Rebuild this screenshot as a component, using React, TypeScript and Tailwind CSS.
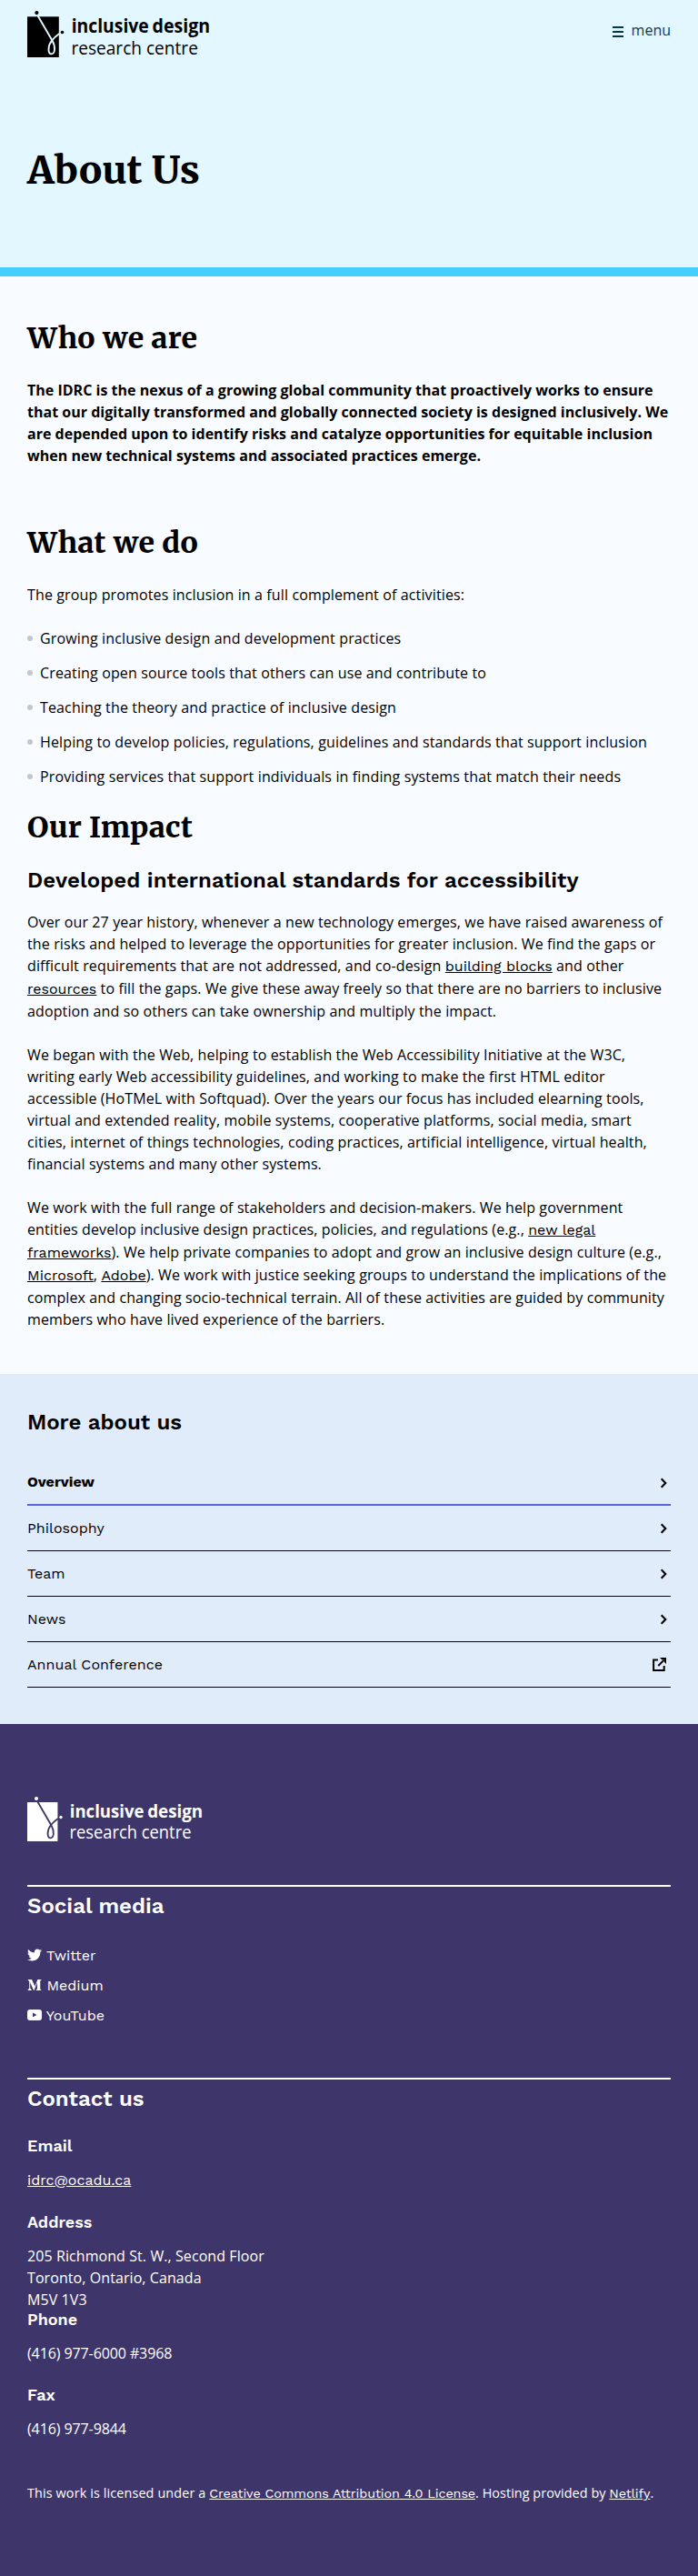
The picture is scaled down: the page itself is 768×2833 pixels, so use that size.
import type { ReactNode } from "react";
import { FaMediumM, FaTwitter } from "react-icons/fa";

const activities = [
  "Growing inclusive design and development practices",
  "Creating open source tools that others can use and contribute to",
  "Teaching the theory and practice of inclusive design",
  "Helping to develop policies, regulations, guidelines and standards that support inclusion",
  "Providing services that support individuals in finding systems that match their needs",
];

const pages = ["Philosophy", "Team", "News"];

function Logo({ className, ink, paper }: { className: string; ink: string; paper: string }) {
  return (
    <svg className={className} viewBox="0 0 202 54" role="img" aria-label="Inclusive Design Research Centre">
      <rect x="0" y="8.3" width="34.8" height="44.7" fill={ink} />
      <path
        d="M10.8 6 L27.3 34.2 C31.6 41.5 30.5 49.3 26.6 49.3 C22.6 49.3 22.2 40.6 27 34.6 C29 32 31.5 29.8 35.2 27"
        fill="none"
        stroke={paper}
        strokeWidth="1.9"
      />
      <circle cx="10.4" cy="4.1" r="2.1" fill={ink} />
      <circle cx="38.5" cy="25.5" r="1.8" fill={ink} />
      <g fill={ink} fontFamily="'Open Sans', sans-serif" fontSize="20.6" letterSpacing="0">
        <text x="48.7" y="26" fontWeight="700" textLength="85" lengthAdjust="spacingAndGlyphs">inclusive</text>
        <text x="137.6" y="26" fontWeight="700" textLength="63.6" lengthAdjust="spacingAndGlyphs">design</text>
        <text x="48.4" y="49.6" textLength="139.5" lengthAdjust="spacingAndGlyphs">research centre</text>
      </g>
    </svg>
  );
}

function Link({ children }: { children: ReactNode }) {
  return (
    <a href="#" className="font-['Work_Sans',Inter,sans-serif] tracking-normal underline">
      {children}
    </a>
  );
}

function SectionTitle({ children }: { children: ReactNode }) {
  return (
    <h2 className="font-['Merriweather','DejaVu_Serif_Condensed',serif] text-[32px] leading-10 font-extrabold tracking-[0.27px]">
      {children}
    </h2>
  );
}

function SubTitle({ children }: { children: ReactNode }) {
  return (
    <h3 className="font-['Work_Sans',Inter,sans-serif] text-2xl leading-[30px] font-semibold">
      {children}
    </h3>
  );
}

function ContactTitle({ children }: { children: ReactNode }) {
  return (
    <h4 className="font-['Work_Sans',Inter,sans-serif] text-lg leading-[18px] font-semibold tracking-normal">
      {children}
    </h4>
  );
}

function Chevron() {
  return (
    <svg className="mr-1 h-3 w-2" viewBox="0 0 8 12" fill="none" stroke="#000" strokeWidth="2.1">
      <path d="M1.7 1.2 L6.3 6 L1.7 10.8" />
    </svg>
  );
}

function ExternalIcon() {
  return (
    <svg className="mr-[5px] h-[15px] w-[15px]" viewBox="0 0 15 15" fill="none" stroke="#000" strokeWidth="2">
      <path d="M6 2.6 H1.1 V13.9 H12.7 V9" />
      <path d="M6.3 9 L12.6 2.6" />
      <path d="M8 0 H15 V7 L12.8 4.8 V2.2 H10.2 Z" fill="#000" stroke="none" />
    </svg>
  );
}

function YoutubeIcon() {
  return (
    <svg className="inline-block h-4 w-4 align-[-2px]" viewBox="0 0 16 16">
      <path fillRule="evenodd" fill="currentColor" d="M3 2 H13 Q16 2 16 5 V11 Q16 14 13 14 H3 Q0 14 0 11 V5 Q0 2 3 2 Z M6 5.6 V10.2 L10.6 7.9 Z" />
    </svg>
  );
}

export default function App() {
  return (
    <div className="w-full bg-[#f8fbff] font-['Open_Sans',sans-serif] text-base leading-6 tracking-[0.13px] text-black">
      <header className="h-[304px] border-b-10 border-[#44cfff] bg-[#e2f7ff] px-[30px]">
        <div className="flex h-[162px] items-start justify-between pt-[10px]">
          <Logo className="h-[54px] w-[202px] overflow-visible" ink="#000" paper="#e2f7ff" />
          <button className="mt-[11px] flex items-start tracking-normal text-[#16384b]">
            <span className="mt-2 mr-[9px] flex h-3 w-3 flex-col justify-between">
              <span className="h-[2px] bg-[#013a49]" />
              <span className="h-[2px] bg-[#013a49]" />
              <span className="h-[2px] bg-[#013a49]" />
            </span>
            menu
          </button>
        </div>
        <h1 className="font-['Merriweather','DejaVu_Serif_Condensed',serif] text-[42px] leading-[50px] font-extrabold tracking-[0.27px]">
          About Us
        </h1>
      </header>

      <main className="h-[1207px] px-[30px] pt-12">
        <SectionTitle>Who we are</SectionTitle>
        <p className="mt-[25px] font-bold tracking-[0.015px]">
          The IDRC is the nexus of a growing global community that proactively works to ensure that our digitally
          transformed and globally connected society is designed inclusively. We are depended upon to identify risks
          and catalyze opportunities for equitable inclusion when new technical systems and associated practices
          emerge.
        </p>
        <div className="mt-16">
          <SectionTitle>What we do</SectionTitle>
        </div>
        <p className="mt-[25px]">The group promotes inclusion in a full complement of activities:</p>
        <ul className="mt-6 flex flex-col gap-[14px] tracking-[0.14px]">
          {activities.map((item) => (
            <li key={item} className="flex items-center gap-2">
              <span className="size-1.5 rounded-full bg-[#c4c6c8]" />
              {item}
            </li>
          ))}
        </ul>
        <div className="mt-6 mb-[23px]">
          <SectionTitle>Our Impact</SectionTitle>
        </div>
        <div className="tracking-[0.08px]">
          <SubTitle>Developed international standards for accessibility</SubTitle>
        </div>
        <div className="mt-[19px] flex flex-col gap-6 tracking-[0.12px]">
          <p>
            Over our 27 year history, whenever a new technology emerges, we have raised awareness of the risks and
            helped to leverage the opportunities for greater inclusion. We find the gaps or difficult requirements that
            are not addressed, and co-design <Link>building blocks</Link> and other <Link>resources</Link> to fill the
            gaps. We give these away freely so that there are no barriers to inclusive adoption and so others can take
            ownership and multiply the impact.
          </p>
          <p>
            We began with the Web, helping to establish the Web Accessibility Initiative at the W3C, writing early Web
            accessibility guidelines, and working to make the first HTML editor accessible (HoTMeL with Softquad). Over
            the years our focus has included elearning tools, virtual and extended reality, mobile systems, cooperative
            platforms, social media, smart cities, internet of things technologies, coding practices, artificial
            intelligence, virtual health, financial systems and many other systems.
          </p>
          <p className="tracking-[0.11px]">
            We work with the full range of stakeholders and decision-makers. We help government
            <br />
            entities develop inclusive design practices, policies, and regulations (e.g., <Link>new legal frameworks</Link>
            ). We help private companies to adopt and grow an inclusive design culture (e.g., <Link>Microsoft</Link>,{" "}
            <Link>Adobe</Link>). We work with justice seeking groups to understand the implications of the complex and
            changing socio-technical terrain. All of these activities are guided by community members who have lived
            experience of the barriers.
          </p>
        </div>
      </main>

      <aside className="h-[385px] bg-[#e0ecfa] px-[30px] pt-[38px] tracking-normal">
        <SubTitle>More about us</SubTitle>
        <nav className="mt-[26px] font-['Work_Sans',Inter,sans-serif] tracking-[0.04px]">
          <a href="#" className="flex h-[51px] items-center justify-between border-b-2 border-[#5b63de] pt-[1px] font-bold tracking-normal">
            Overview
            <span className="pt-[2px]"><Chevron /></span>
          </a>
          {pages.map((page) => (
            <a key={page} href="#" className="flex h-[50px] items-center justify-between border-b border-black">
              {page}
              <span className="pt-px"><Chevron /></span>
            </a>
          ))}
          <a href="#" className="flex h-[50px] items-center justify-between border-b border-black">
            Annual Conference
            <ExternalIcon />
          </a>
        </nav>
      </aside>

      <footer className="h-[937px] bg-[#3e366a] px-[30px] pt-[78px] tracking-normal text-white">
        <Logo className="h-[52px] w-[194px] overflow-visible" ink="#fff" paper="#3e366a" />
        <section className="mt-[47px] border-t-2 border-white pt-[6px]">
          <SubTitle>Social media</SubTitle>
          <ul className="mt-[28px] flex flex-col gap-[9px] font-['Work_Sans',Inter,sans-serif]">
            <li className="h-6">
              <FaTwitter className="inline-block size-4 align-[-2px]" /> Twitter
            </li>
            <li className="h-6">
              <FaMediumM className="inline-block size-4 align-[-2px]" /> Medium
            </li>
            <li className="h-6">
              <YoutubeIcon /> YouTube
            </li>
          </ul>
        </section>
        <section className="mt-[56px] border-t-2 border-white pt-[6px]">
          <SubTitle>Contact us</SubTitle>
          <div className="mt-[28px]">
            <ContactTitle>Email</ContactTitle>
            <p className="mt-[17px] h-6 font-['Work_Sans',Inter,sans-serif]">
              <Link>idrc@ocadu.ca</Link>
            </p>
          </div>
          <div className="mt-[25px]">
            <ContactTitle>Address</ContactTitle>
            <address className="mt-4 tracking-[0.08px] not-italic">
              205 Richmond St. W., Second Floor
              <br />
              Toronto, Ontario, Canada
              <br />
              M5V 1V3
            </address>
          </div>
          <div className="mt-px">
            <ContactTitle>Phone</ContactTitle>
          </div>
          <p className="mt-4 tracking-[-0.1px]">(416) 977-6000 #3968</p>
          <div className="mt-[25px]">
            <ContactTitle>Fax</ContactTitle>
            <p className="mt-4 tracking-[-0.1px]">(416) 977-9844</p>
          </div>
        </section>
        <p className="mt-[47px] text-[14.4px] leading-6 tracking-[0.05px]">
          <span className="tracking-[0.12px]">This work is licensed under a </span>
          <a href="#" className="font-['Work_Sans',Inter,sans-serif] tracking-[-0.11px] underline">
            Creative Commons Attribution 4.0 License
          </a>
          . Hosting provided by{" "}
          <a href="#" className="font-['Work_Sans',Inter,sans-serif] tracking-[-0.11px] underline">
            Netlify
          </a>
          .
        </p>
      </footer>
    </div>
  );
}
